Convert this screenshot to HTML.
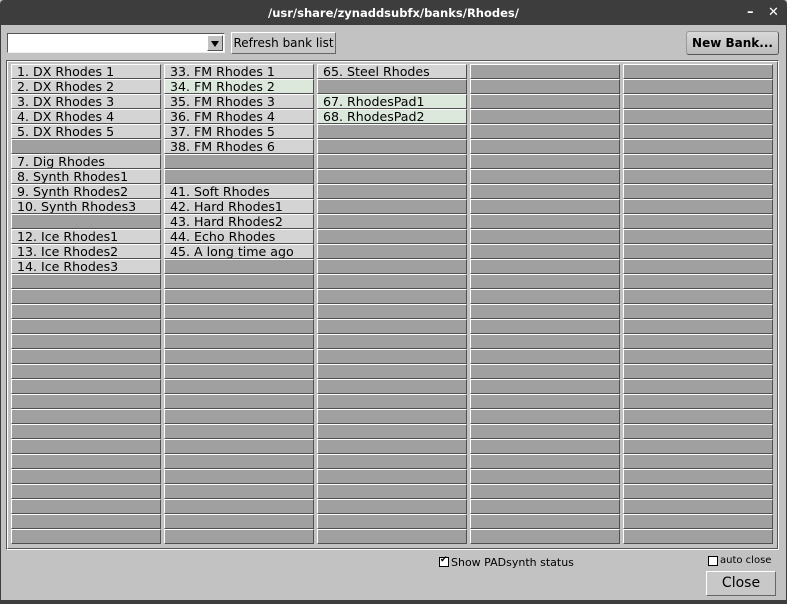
<!DOCTYPE html>
<html><head><meta charset="utf-8"><style>
*{box-sizing:border-box;margin:0;padding:0}
body{width:787px;height:604px;background:#c2c2c2;position:relative;overflow:hidden;font-family:"DejaVu Sans","Liberation Sans",sans-serif}
.title{position:absolute;left:0;top:0;width:787px;height:25px;background:#3d3d3d;color:#fff;font-weight:bold;font-size:11.5px;text-align:center;line-height:26px;border-radius:4px 4px 0 0}
.ctl{position:absolute;top:0;color:#fff;font-weight:bold;font-size:13px;line-height:26px}
.lb{position:absolute;left:0;top:25px;width:1px;height:579px;background:#3d3d3d}
.rb{position:absolute;right:0;top:25px;width:1px;height:579px;background:#3d3d3d}
.bb{position:absolute;left:0;top:600px;width:787px;height:4px;background:#3d3d3d}
.combo{position:absolute;left:7px;top:33px;width:218px;height:20px;background:#fff;border:1px solid #555;border-right-color:#eee;border-bottom-color:#eee}
.arr{position:absolute;right:1px;top:1px;width:16px;height:16px;background:#c2c2c2;border:1px solid #fff;border-right-color:#555;border-bottom-color:#555}
.arr:after{content:"";position:absolute;left:3px;top:5px;border-left:4px solid transparent;border-right:4px solid transparent;border-top:6px solid #000}
.btn{position:absolute;background:#c8c8c8;border:1px solid #fff;border-right-color:#666;border-bottom-color:#666;font-size:12px;text-align:center}
.panel{position:absolute;left:6px;top:60px;width:773px;height:490px;border:1px solid #555;border-right-color:#fff;border-bottom-color:#fff}
.panel2{position:absolute;left:7px;top:61px;width:771px;height:488px;border:1px solid #fff;border-right-color:#555;border-bottom-color:#555}
.cell{position:absolute;width:150px;height:15px;background:#a0a0a0;border-top:1px solid #fff;border-left:1px solid #fff;border-bottom:1px solid #505050;border-right:1px solid #505050;font-size:12.6px;line-height:13px;padding-left:5px;white-space:nowrap;overflow:hidden;color:#000}
.f{background:#d4d4d4}
.g{background:#dde8dd}
.cb{position:absolute;width:10px;height:10px;background:#fff;border:1px solid #000}
.lab{position:absolute;font-size:11px}
</style></head><body>
<div class="title">/usr/share/zynaddsubfx/banks/Rhodes/</div>
<div class="ctl" style="left:747px">–</div>
<div class="ctl" style="left:768px">✕</div>
<div class="lb"></div><div class="rb"></div><div class="bb"></div>
<div class="combo"><div class="arr"></div></div>
<div class="btn" style="left:231px;top:32px;width:105px;height:22px;line-height:20px">Refresh bank list</div>
<div class="btn" style="left:686px;top:31px;width:93px;height:24px;line-height:22px;font-weight:bold;border-radius:3px;background:linear-gradient(#d8d8d8,#bcbcbc);border-color:#999 #555 #555 #999">New Bank...</div>
<div class="panel"></div><div class="panel2"></div>
<div id="grid"></div>
<div class="cb" style="left:439px;top:557px"><span style="position:absolute;left:0px;top:-3px;font-size:9px;font-weight:bold">✔</span></div>
<div class="lab" style="left:451px;top:556px">Show PADsynth status</div>
<div class="cb" style="left:708px;top:556px"></div>
<div class="lab" style="left:720px;top:555px;font-size:10px">auto close</div>
<div class="btn" style="left:706px;top:571px;width:70px;height:25px;line-height:23px;font-size:14px">Close</div>
<script>
var d={0:{0:"1. DX Rhodes 1",1:"2. DX Rhodes 2",2:"3. DX Rhodes 3",3:"4. DX Rhodes 4",4:"5. DX Rhodes 5",5:"",6:"7. Dig Rhodes",7:"8. Synth Rhodes1",8:"9. Synth Rhodes2",9:"10. Synth Rhodes3",11:"12. Ice Rhodes1",12:"13. Ice Rhodes2",13:"14. Ice Rhodes3"},
1:{0:"33. FM Rhodes 1",1:"*34. FM Rhodes 2",2:"35. FM Rhodes 3",3:"36. FM Rhodes 4",4:"37. FM Rhodes 5",5:"38. FM Rhodes 6",8:"41. Soft Rhodes",9:"42. Hard Rhodes1",10:"43. Hard Rhodes2",11:"44. Echo Rhodes",12:"45. A long time ago"},
2:{0:"65. Steel Rhodes",2:"*67. RhodesPad1",3:"*68. RhodesPad2"}};
var h="";
for(var c=0;c<5;c++)for(var r=0;r<32;r++){var t=(d[c]||{})[r],cls="cell";if(t){if(t[0]=="*"){cls+=" g";t=t.slice(1)}else cls+=" f"}else t="";
h+='<div class="'+cls+'" style="left:'+(11+c*153)+'px;top:'+(64+r*15)+'px">'+t+'</div>'}
document.getElementById("grid").innerHTML=h;
</script>
</body></html>
